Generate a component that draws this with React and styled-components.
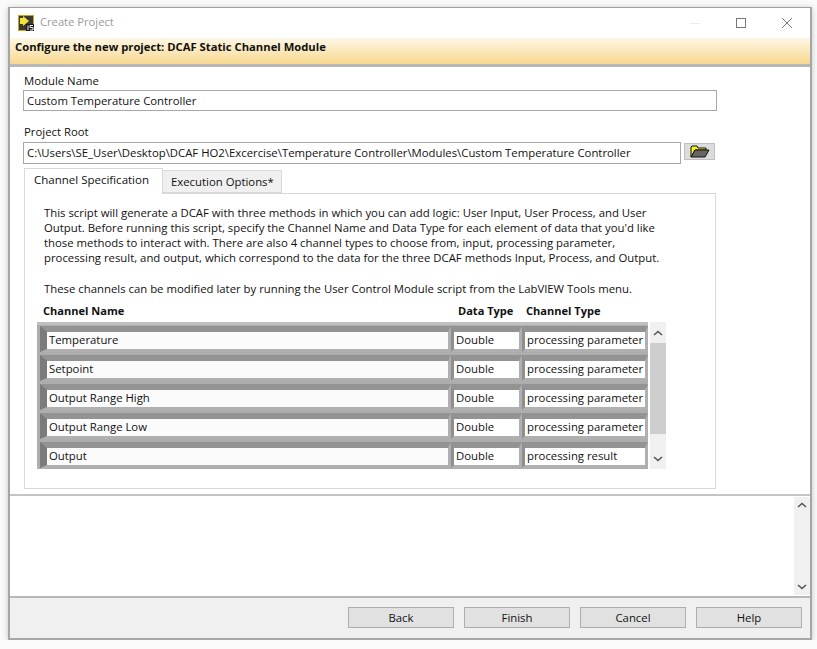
import React from "react";
import styled, { createGlobalStyle } from "styled-components";

const Global = createGlobalStyle`
  html, body { margin: 0; padding: 0; background: #fafafa; }
  body { font-family: "Open Sans", "Noto Sans", sans-serif; font-size: 11.35px; color: #111; }
  * { box-sizing: border-box; }
`;

const Window = styled.div`
  margin: 7px 0 0 8px;
  width: 804px;
  height: 633px;
  display: flex;
  flex-direction: column;
  background: #fff;
  border: 2px solid #a6a6a6;
  border-top: 1px solid #a0a0a0;
  box-shadow: 0 1px 6px rgba(0, 0, 0, 0.22);
`;
const TitleBar = styled.div`
  height: 30px;
  flex: none;
  display: flex;
  align-items: center;
  padding-left: 8px;
  background: #fff;
`;
const AppIcon = styled.svg`
  width: 16px;
  height: 16px;
  margin-right: 6px;
`;
const Title = styled.div`
  flex: 1;
  color: #999;
  font-size: 11.2px;
  line-height: 14px;
  margin-top: -2px;
`;
const WinButton = styled.div`
  width: 46px;
  height: 30px;
  display: flex;
  align-items: center;
  justify-content: center;
  svg { display: block; }
`;
const Banner = styled.div`
  height: 29px;
  flex: none;
  padding: 1px 0 0 5px;
  background: linear-gradient(#fdf7e6, #f8d88f);
  border-bottom: 3px solid #b8b8b8;
  font-weight: 700;
  font-size: 11.25px;
  line-height: 15px;
`;
const Main = styled.div`
  height: 429px;
  flex: none;
  padding: 6px 0 0 13px;
  border-bottom: 2px solid #c4c4c4;
`;
const Label = styled.div`
  height: ${(p) => p.$h}px;
  line-height: 16px;
  margin-left: 1px;
`;
const TextField = styled.div`
  width: ${(p) => p.$w}px;
  height: ${(p) => p.$h}px;
  border: 1px solid #a8a8a8;
  padding-left: 3px;
  line-height: ${(p) => p.$h - 2}px;
  white-space: nowrap;
`;
const PathRow = styled.div`
  display: flex;
  align-items: flex-start;
  margin-bottom: 4px;
`;
const Spacer = styled.div`
  height: ${(p) => p.$h}px;
`;
const Browse = styled.div`
  width: 31px;
  height: 17px;
  margin: 1px 0 0 3px;
  background: #dcdcdc;
  border: 1px solid #c0c0c0;
  display: flex;
  align-items: center;
  justify-content: center;
`;
const Tabs = styled.div`
  display: flex;
  align-items: flex-end;
  margin-left: 1px;
  height: 26px;
  position: relative;
  z-index: 1;
`;
const Tab = styled.div`
  border: 1px solid #d9d9d9;
  background: ${(p) => (p.$active ? "#fff" : "#f0f0f0")};
  width: ${(p) => p.$w}px;
  height: ${(p) => (p.$active ? 26 : 23)}px;
  border-bottom: ${(p) => (p.$active ? "none" : "1px solid #d9d9d9")};
  margin-bottom: ${(p) => (p.$active ? 0 : 1)}px;
  margin-left: ${(p) => (p.$active ? 0 : -1)}px;
  padding-left: ${(p) => (p.$active ? 9 : 8)}px;
  font-size: ${(p) => (p.$active ? 11.5 : 11.35)}px;
  line-height: 22px;
  white-space: nowrap;
`;
const Panel = styled.div`
  margin: -1px 0 0 1px;
  width: 692px;
  height: 296px;
  border: 1px solid #d9d9d9;
  padding: 11px 0 0 12px;
`;
const Para = styled.p`
  margin: 0 0 ${(p) => p.$after}px 7px;
  width: 640px;
  line-height: 15px;
  white-space: pre-line;
`;
const Heads = styled.div`
  display: flex;
  font-weight: 700;
  height: 16px;
  line-height: 16px;
  margin: 0 0 3px 6px;
  font-size: 11.05px;
`;
const Head = styled.div`
  width: ${(p) => p.$w}px;
  white-space: nowrap;
`;
const TableWrap = styled.div`
  display: flex;
  align-items: stretch;
`;
const ArrayFrame = styled.div`
  width: 611px;
  height: 147px;
  background: #adadad;
  padding: 1px 0 0 3px;
  border-top: 3px solid #c0c0c0;
  display: flex;
  flex-direction: column;
  gap: 3px;
`;
const Row = styled.div`
  display: flex;
`;
const Cell = styled.div`
  width: ${(p) => p.$w}px;
  height: 26px;
  border-style: solid;
  border-width: 6px 3px 3px ${(p) => p.$left}px;
  border-color: #939393 #b0b0b0 #b0b0b0 ${(p) => p.$edge};
  background: ${(p) => p.$bg};
  padding-left: ${(p) => p.$pad}px;
  line-height: 16px;
  white-space: nowrap;
  overflow: hidden;
`;
const VScroll = styled.div`
  width: ${(p) => p.$w}px;
  margin-left: ${(p) => p.$ml}px;
  height: ${(p) => p.$h}px;
  background: #f0f0f0;
  display: flex;
  flex-direction: column;
  flex: none;
`;
const Arrow = styled.div`
  height: ${(p) => p.$h}px;
  flex: none;
  display: flex;
  align-items: center;
  justify-content: center;
`;
const Thumb = styled.div`
  height: ${(p) => p.$h}px;
  background: #cdcdcd;
  flex: none;
`;
const Fill = styled.div`
  flex: 1;
`;
const Log = styled.div`
  height: 102px;
  flex: none;
  display: flex;
  justify-content: flex-end;
  border-bottom: 2px solid #b8b8b8;
  padding-top: 1px;
`;
const Footer = styled.div`
  flex: 1;
  background: #f0f0f0;
  display: flex;
  justify-content: flex-end;
  gap: 10px;
  padding: 9px 8px 0 0;
`;
const Button = styled.div`
  width: 106px;
  height: 21px;
  background: #e1e1e1;
  border: 1px solid #adadad;
  text-align: center;
  line-height: 19px;
`;

const Chevron = ({ up }) => (
  <svg width="10" height="6" viewBox="0 0 10 6">
    <path d={up ? "M1 5 L5 1.5 L9 5" : "M1 1 L5 4.5 L9 1"} fill="none" stroke="#555" strokeWidth="1.6" />
  </svg>
);

const rows = [
  ["Temperature", "processing parameter"],
  ["Setpoint", "processing parameter"],
  ["Output Range High", "processing parameter"],
  ["Output Range Low", "processing parameter"],
  ["Output", "processing result"],
];

export default function App() {
  return (
    <>
      <Global />
      <Window>
        <TitleBar>
          <AppIcon viewBox="0 0 16 16">
            <rect width="16" height="16" fill="#c9a227" />
            <rect x="1" y="1" width="14" height="14" fill="#3a3a30" />
            <path d="M2 3 H5 V1 L11 6 L5 11 V9 H2 Z" fill="#f2e23a" />
            <rect x="8" y="9" width="8" height="7" fill="#1c1c1c" />
            <path d="M10 10.5 V15 M12 10.5 H15 M12 10.5 V12.5 H15 V15 H12" stroke="#f0f0f0" strokeWidth="1" fill="none" />
          </AppIcon>
          <Title>Create Project</Title>
          <WinButton>
            <svg width="10" height="10" viewBox="0 0 10 10"><path d="M0 5.5 H10" stroke="#ececec" strokeWidth="1" /></svg>
          </WinButton>
          <WinButton>
            <svg width="10" height="10" viewBox="0 0 10 10"><rect x="0.5" y="0.5" width="9" height="9" fill="none" stroke="#777" /></svg>
          </WinButton>
          <WinButton>
            <svg width="10" height="10" viewBox="0 0 10 10"><path d="M0 0 L10 10 M10 0 L0 10" stroke="#777" strokeWidth="1" /></svg>
          </WinButton>
        </TitleBar>
        <Banner>Configure the new project: DCAF Static Channel Module</Banner>
        <Main>
          <Label $h={17}>Module Name</Label>
          <TextField $w={694} $h={21}>Custom Temperature Controller</TextField>
          <Spacer $h={13} />
          <Label $h={18}>Project Root</Label>
          <PathRow>
            <TextField $w={658} $h={22}>C:\Users\SE_User\Desktop\DCAF HO2\Excercise\Temperature Controller\Modules\Custom Temperature Controller</TextField>
            <Browse>
              <svg width="20" height="13" viewBox="0 0 20 13">
                <path d="M1 12 V2 L2 1 H7 L8 3 H16 V5 H5 L1 12 Z" fill="#f6f21c" stroke="#111" strokeWidth="1" />
                <path d="M1 12 L5 5 H19 L15 12 Z" fill="#666" stroke="#111" strokeWidth="1" />
              </svg>
            </Browse>
          </PathRow>
          <Tabs>
            <Tab $active $w={139}>Channel Specification</Tab>
            <Tab $w={120}>Execution Options*</Tab>
          </Tabs>
          <Panel>
            <Para $after={16}>{"This script will generate a DCAF with three methods in which you can add logic: User Input, User Process, and User\nOutput. Before running this script, specify the Channel Name and Data Type for each element of data that you'd like\nthose methods to interact with. There are also 4 channel types to choose from, input, processing parameter,\nprocessing result, and output, which correspond to the data for the three DCAF methods Input, Process, and Output."}</Para>
            <Para $after={7}>These channels can be modified later by running the User Control Module script from the LabVIEW Tools menu.</Para>
            <Heads>
              <Head $w={415}>Channel Name</Head>
              <Head $w={68}>Data Type</Head>
              <Head $w={90}>Channel Type</Head>
            </Heads>
            <TableWrap>
              <ArrayFrame>
                {rows.map(([name, type]) => (
                  <Row key={name}>
                    <Cell $w={411} $left={7} $edge="#7b7b7b" $pad={2} $bg="#fbfbfb">{name}</Cell>
                    <Cell $w={71} $left={3} $edge="#8f8f8f" $pad={2} $bg="#fff">Double</Cell>
                    <Cell $w={126} $left={3} $edge="#8f8f8f" $pad={2} $bg="#fff">{type}</Cell>
                  </Row>
                ))}
              </ArrayFrame>
              <VScroll $w={16} $ml={2} $h={147}>
                <Arrow $h={21}><Chevron up /></Arrow>
                <Thumb $h={91} />
                <Fill />
                <Arrow $h={20}><Chevron /></Arrow>
              </VScroll>
            </TableWrap>
          </Panel>
        </Main>
        <Log>
          <VScroll $w={16} $ml={0} $h={98}>
            <Arrow $h={16}><Chevron up /></Arrow>
            <Fill />
            <Arrow $h={16}><Chevron /></Arrow>
          </VScroll>
        </Log>
        <Footer>
          <Button>Back</Button>
          <Button>Finish</Button>
          <Button>Cancel</Button>
          <Button>Help</Button>
        </Footer>
      </Window>
    </>
  );
}
